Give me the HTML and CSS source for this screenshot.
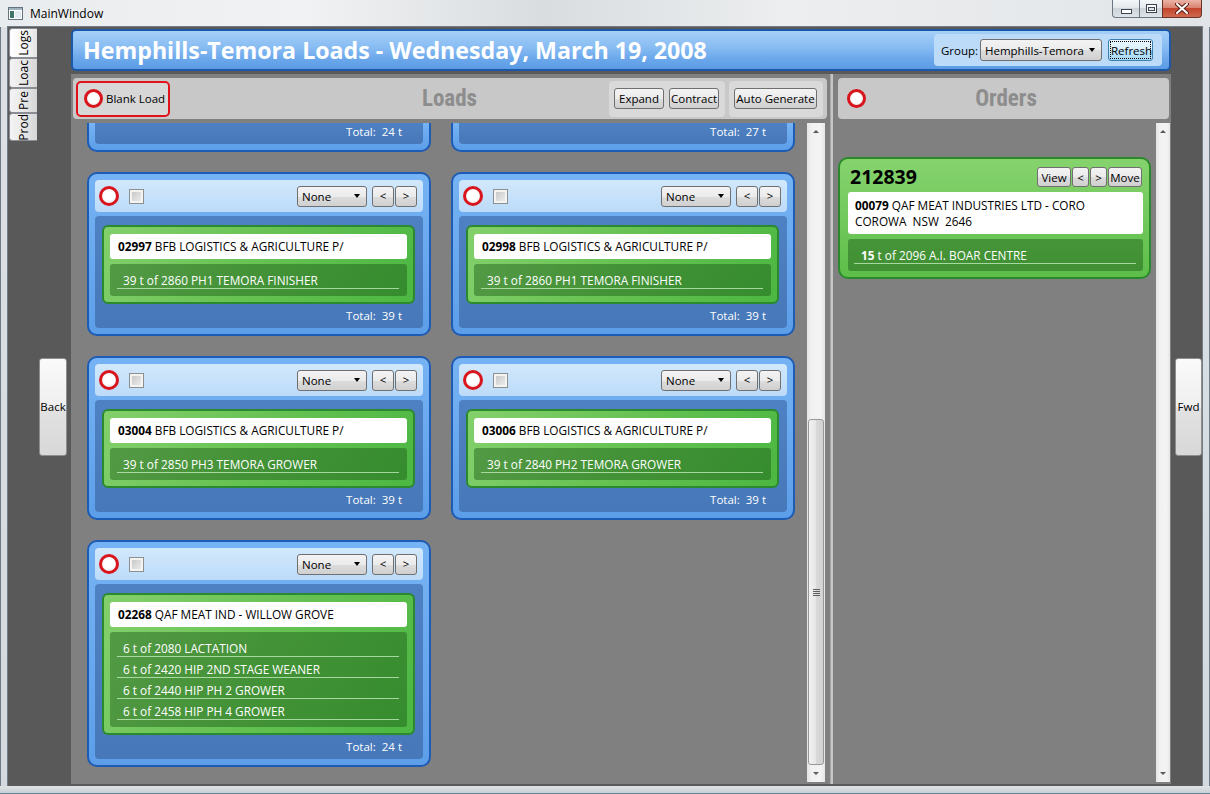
FILE: index.html
```html
<!DOCTYPE html>
<html lang="en">
<head>
<meta charset="utf-8">
<title>MainWindow</title>
<link rel="stylesheet" href="styles.css">
</head>
<body>
<div class="window">
  <div class="titlebar">
    <svg class="app-icon" width="15" height="13" viewBox="0 0 15 13">
      <rect x="0.5" y="0.5" width="14" height="12" fill="#ffffff" stroke="#66737f"/>
      <rect x="1" y="1" width="13" height="2" fill="#9fb2c2"/>
      <rect x="2" y="4" width="4" height="7" fill="#3f7667"/>
      <rect x="7" y="4" width="6" height="7" fill="#e3ebf0"/>
    </svg>
    <div class="win-title">MainWindow</div>
    <div class="controls">
      <div class="ctl ctl-min">
        <svg width="11" height="5" viewBox="0 0 11 5"><rect x="0.5" y="0.5" width="10" height="4" fill="#fff" stroke="#3d4650"/></svg>
      </div>
      <div class="ctl ctl-max">
        <svg width="11" height="9" viewBox="0 0 11 9"><rect x="0.5" y="0.5" width="10" height="8" fill="#fff" stroke="#3d4650"/><rect x="2.5" y="3.5" width="6" height="3" fill="#dfe5ea" stroke="#3d4650"/></svg>
      </div>
      <div class="ctl ctl-close">
        <svg width="14" height="11" viewBox="0 0 14 11"><path d="M2 1 L12 10 M12 1 L2 10" stroke="#5a1e16" stroke-width="4" stroke-linecap="round"/><path d="M2 1 L12 10 M12 1 L2 10" stroke="#ffffff" stroke-width="2" stroke-linecap="round"/></svg>
      </div>
    </div>
  </div>

  <div class="frame-mid">
    <div class="frame-side"></div>
    <div class="client">
      <nav class="tabstrip">
        <div class="vtab vtab-sel h30"><span>Logs</span></div>
        <div class="vtab h30"><span>Loac</span></div>
        <div class="vtab h25"><span>Pre</span></div>
        <div class="vtab h28"><span>Prod</span></div>
      </nav>

      <div class="nav-col nav-left"><button class="nav-btn">Back</button></div>

      <div class="main">
        <header class="banner">
          <h1>Hemphills-Temora Loads - Wednesday, March 19, 2008</h1>
          <div class="group-panel">
            <span class="group-label">Group:</span>
            <div class="combo combo-wide"><span>Hemphills-Temora</span><span class="dd-arrow"></span></div>
            <button class="btn btn-refresh"><span class="focus-rect">Refresh</span></button>
          </div>
        </header>

        <div class="panels">
          <section class="panel panel-loads">
            <div class="toolbar">
              <div class="tb-left">
                <button class="blank-load"><span class="ring ring-sm"></span>Blank Load</button>
              </div>
              <div class="tb-title">Loads</div>
              <div class="tb-right">
                <div class="btn-group">
                  <button class="btn btn-expand">Expand</button>
                  <button class="btn btn-expand">Contract</button>
                </div>
                <div class="btn-group">
                  <button class="btn btn-auto">Auto Generate</button>
                </div>
              </div>
            </div>

            <div class="scroller">
              <div class="viewport">
                <div class="card-grid">
                  <div class="load-card cut">
                    <div class="lc-body">
                      <div class="total">Total:&nbsp; 24 t</div>
                    </div>
                  </div>
                  <div class="load-card cut">
                    <div class="lc-body">
                      <div class="total">Total:&nbsp; 27 t</div>
                    </div>
                  </div>

                  <div class="load-card">
                    <div class="lc-head">
                      <span class="ring"></span><span class="check"></span>
                      <div class="combo combo-small"><span>None</span><span class="dd-arrow"></span></div>
                      <div class="pager"><button class="btn btn-pg">&lt;</button><button class="btn btn-pg">&gt;</button></div>
                    </div>
                    <div class="lc-body">
                      <div class="order-box">
                        <div class="cust"><b>02997</b> BFB LOGISTICS &amp; AGRICULTURE P/</div>
                        <ul class="items"><li>39 t of 2860 PH1 TEMORA FINISHER</li></ul>
                      </div>
                      <div class="total">Total:&nbsp; 39 t</div>
                    </div>
                  </div>

                  <div class="load-card">
                    <div class="lc-head">
                      <span class="ring"></span><span class="check"></span>
                      <div class="combo combo-small"><span>None</span><span class="dd-arrow"></span></div>
                      <div class="pager"><button class="btn btn-pg">&lt;</button><button class="btn btn-pg">&gt;</button></div>
                    </div>
                    <div class="lc-body">
                      <div class="order-box">
                        <div class="cust"><b>02998</b> BFB LOGISTICS &amp; AGRICULTURE P/</div>
                        <ul class="items"><li>39 t of 2860 PH1 TEMORA FINISHER</li></ul>
                      </div>
                      <div class="total">Total:&nbsp; 39 t</div>
                    </div>
                  </div>

                  <div class="load-card">
                    <div class="lc-head">
                      <span class="ring"></span><span class="check"></span>
                      <div class="combo combo-small"><span>None</span><span class="dd-arrow"></span></div>
                      <div class="pager"><button class="btn btn-pg">&lt;</button><button class="btn btn-pg">&gt;</button></div>
                    </div>
                    <div class="lc-body">
                      <div class="order-box">
                        <div class="cust"><b>03004</b> BFB LOGISTICS &amp; AGRICULTURE P/</div>
                        <ul class="items"><li>39 t of 2850 PH3 TEMORA GROWER</li></ul>
                      </div>
                      <div class="total">Total:&nbsp; 39 t</div>
                    </div>
                  </div>

                  <div class="load-card">
                    <div class="lc-head">
                      <span class="ring"></span><span class="check"></span>
                      <div class="combo combo-small"><span>None</span><span class="dd-arrow"></span></div>
                      <div class="pager"><button class="btn btn-pg">&lt;</button><button class="btn btn-pg">&gt;</button></div>
                    </div>
                    <div class="lc-body">
                      <div class="order-box">
                        <div class="cust"><b>03006</b> BFB LOGISTICS &amp; AGRICULTURE P/</div>
                        <ul class="items"><li>39 t of 2840 PH2 TEMORA GROWER</li></ul>
                      </div>
                      <div class="total">Total:&nbsp; 39 t</div>
                    </div>
                  </div>

                  <div class="load-card">
                    <div class="lc-head">
                      <span class="ring"></span><span class="check"></span>
                      <div class="combo combo-small"><span>None</span><span class="dd-arrow"></span></div>
                      <div class="pager"><button class="btn btn-pg">&lt;</button><button class="btn btn-pg">&gt;</button></div>
                    </div>
                    <div class="lc-body">
                      <div class="order-box">
                        <div class="cust"><b>02268</b> QAF MEAT IND - WILLOW GROVE</div>
                        <ul class="items">
                          <li>6 t of 2080 LACTATION</li>
                          <li>6 t of 2420 HIP 2ND STAGE WEANER</li>
                          <li>6 t of 2440 HIP PH 2 GROWER</li>
                          <li>6 t of 2458 HIP PH 4 GROWER</li>
                        </ul>
                      </div>
                      <div class="total">Total:&nbsp; 24 t</div>
                    </div>
                  </div>
                </div>
              </div>
              <div class="vscroll vscroll-loads">
                <div class="sb-arrow"><span class="tri-up"></span></div>
                <div class="sb-space"></div>
                <div class="sb-thumb">
                  <svg width="7" height="7" viewBox="0 0 7 7"><path d="M0 0.5H7M0 2.5H7M0 4.5H7M0 6.5H7" stroke="#5f5f5f" stroke-width="1"/></svg>
                </div>
                <div class="sb-arrow"><span class="tri-down"></span></div>
              </div>
            </div>
          </section>

          <div class="splitter"></div>

          <section class="panel panel-orders">
            <div class="toolbar toolbar-orders">
              <div class="tb-left"><span class="ring ring-sm"></span></div>
              <div class="tb-title">Orders</div>
              <div class="tb-right"></div>
            </div>
            <div class="scroller">
              <div class="viewport viewport-orders">
                <div class="order-card">
                  <div class="oc-head">
                    <span class="oc-num">212839</span>
                    <div class="oc-btns">
                      <button class="btn btn-wide">View</button>
                      <button class="btn btn-narrow">&lt;</button>
                      <button class="btn btn-narrow">&gt;</button>
                      <button class="btn btn-wide">Move</button>
                    </div>
                  </div>
                  <div class="cust addr"><b>00079</b> QAF MEAT INDUSTRIES LTD - CORO<br>COROWA&nbsp; NSW&nbsp; 2646</div>
                  <ul class="items items-order"><li><b>15</b> t of 2096 A.I. BOAR CENTRE</li></ul>
                </div>
              </div>
              <div class="vscroll vscroll-orders">
                <div class="sb-arrow"><span class="tri-up"></span></div>
                <div class="sb-space"></div>
                <div class="sb-arrow"><span class="tri-down"></span></div>
              </div>
            </div>
          </section>
        </div>
      </div>

      <div class="nav-col nav-right"><button class="nav-btn">Fwd</button></div>
    </div>
    <div class="frame-side"></div>
  </div>
  <div class="frame-bottom"></div>
</div>
</body>
</html>
```

FILE: styles.css
```css
* { box-sizing: border-box; }
html, body { margin: 0; padding: 0; }
body {
  width: 1210px;
  height: 794px;
  overflow: hidden;
  font-family: "Segoe UI", "Open Sans", "Noto Sans", sans-serif;
  font-size: 11.5px;
  color: #000;
  background: #d9dee2;
}
button { font-family: inherit; font-size: inherit; color: #000; margin: 0; }
ul { list-style: none; margin: 0; padding: 0; }

.window {
  width: 1210px;
  height: 794px;
  display: flex;
  flex-direction: column;
  background: linear-gradient(180deg, #eef0f2 0px, #dde1e5 27px, #d3d9de 100%);
  box-shadow: inset 0 0 0 1px #6f7a84;
}

/* ---------- title bar ---------- */
.titlebar {
  height: 27px;
  flex: none;
  display: flex;
  align-items: flex-start;
  background: linear-gradient(90deg, #e9ecee 0%, #f1f2f3 25%, #d9dde0 45%, #eceeef 65%, #e2e5e8 100%);
}
.app-icon { margin: 7px 0 0 8px; flex: none; }
.win-title { margin-left: 7px; line-height: 27px; font-size: 12px; }
.controls {
  margin-left: auto;
  margin-right: 8px;
  display: flex;
  height: 18px;
}
.ctl {
  height: 18px;
  display: flex;
  align-items: center;
  justify-content: center;
  border: 1px solid #6c7680;
  border-top: none;
  background: linear-gradient(#f4f6f8 0%, #e3e8ec 45%, #cdd4da 50%, #dde3e8 100%);
}
.ctl-min { width: 27px; border-radius: 0 0 0 4px; border-right: none; padding-top: 5px; }
.ctl-max { width: 23px; border-right: none; }
.ctl-close {
  width: 40px;
  border-radius: 0 0 4px 0;
  border-color: #6e3328;
  background: linear-gradient(#eab3a6 0%, #d98471 45%, #c3452e 50%, #cf6a4f 100%);
}

/* ---------- frame ---------- */
.frame-mid { height: 759px; flex: none; display: flex; }
.frame-side { width: 8px; flex: none; }
.frame-bottom {
  height: 8px;
  flex: none;
  background: linear-gradient(#dfe3e6, #c9d0d5);
  border-bottom: 1px solid #5f8a95;
}

.client {
  width: 1194px;
  flex: none;
  display: flex;
  background: #595959;
  box-shadow: 0 0 0 1px #737d86;
}

/* ---------- left tabs ---------- */
.tabstrip {
  width: 30px;
  flex: none;
  padding: 1px 0 0 1px;
  display: flex;
  flex-direction: column;
}
.vtab {
  width: 28px;
  border: 1px solid #8a8d93;
  border-right: none;
  border-radius: 3px 0 0 3px;
  background: linear-gradient(90deg, #f3f3f3 0%, #e9e9e9 50%, #d6d6d6 100%);
  display: flex;
  align-items: center;
  justify-content: center;
  overflow: hidden;
}
.vtab span {
  writing-mode: vertical-rl;
  transform: rotate(180deg);
  white-space: nowrap;
  font-size: 12px;
  line-height: 14px;
}
.vtab-sel { background: linear-gradient(90deg, #ffffff 0%, #f4f4f4 60%, #e4e4e4 100%); }
.h30 { height: 30px; }
.h25 { height: 25px; }
.h28 { height: 28px; }

/* ---------- back / fwd ---------- */
.nav-col { flex: none; display: flex; align-items: center; }
.nav-left { width: 33px; padding-left: 1px; }
.nav-right { width: 31px; padding-left: 4px; }
.nav-btn {
  width: 28px;
  height: 98px;
  padding: 0;
  border: 1px solid #8e8e8e;
  border-radius: 3px;
  background: linear-gradient(#fafafa 0%, #efefef 50%, #e2e2e2 51%, #d8d8d8 100%);
  font-size: 11.5px;
}
.nav-right .nav-btn { width: 27px; }

/* ---------- main ---------- */
.main {
  width: 1100px;
  flex: none;
  display: flex;
  flex-direction: column;
  padding: 2px 0;
}

.banner {
  height: 42px;
  flex: none;
  margin-bottom: 3px;
  border: 2px solid #1c57a8;
  border-radius: 5px;
  background: linear-gradient(#a5cff8 0%, #86bbf2 45%, #6ea9ec 70%, #5b9be5 100%);
  display: flex;
  align-items: center;
  padding: 0 7px 0 10px;
}
.banner h1 {
  margin: 0;
  font-size: 23.2px;
  font-weight: bold;
  color: #ffffff;
  white-space: nowrap;
  letter-spacing: 0;
}
.group-panel {
  margin-left: auto;
  height: 32px;
  display: flex;
  align-items: center;
  padding: 0 9px 0 7px;
  background: #bbdbf9;
  border-radius: 4px;
}
.group-label { margin-right: 2px; }

.combo {
  display: flex;
  align-items: center;
  justify-content: space-between;
  border: 1px solid #707070;
  border-radius: 3px;
  background: linear-gradient(#f3f3f3 0%, #ebebeb 50%, #dddddd 51%, #d0d0d0 100%);
  padding: 0 6px 0 4px;
}
.combo-wide { width: 122px; height: 22px; }
.combo-small { width: 70px; height: 21px; margin-left: auto; }
.dd-arrow {
  width: 0;
  height: 0;
  border-left: 3.5px solid transparent;
  border-right: 3.5px solid transparent;
  border-top: 4px solid #000;
}

.btn {
  height: 21px;
  padding: 0;
  border: 1px solid #707070;
  border-radius: 3px;
  background: linear-gradient(#f3f3f3 0%, #ebebeb 50%, #dddddd 51%, #cfcfcf 100%);
  line-height: 18px;
  text-align: center;
}
.btn-refresh {
  width: 45px;
  height: 22px;
  margin-left: 6px;
  border-color: #3c7fb1;
  background: linear-gradient(#eaf6fd 0%, #d9f0fc 50%, #bee6fd 51%, #a7d9f5 100%);
  padding: 1px;
}
.focus-rect {
  display: block;
  height: 100%;
  border: 1px dotted #000;
  line-height: 17px;
}

/* ---------- panels ---------- */
.panels { flex: 1; display: flex; min-height: 0; }
.panel { background: #808080; display: flex; flex-direction: column; min-height: 0; }
.panel-loads { width: 759px; padding: 4px 3px 2px 2px; }
.splitter { width: 3px; flex: none; background: #c6c6c6; border-left: 1px solid #a9a9a9; }
.panel-orders { width: 338px; padding: 4px 1px 2px 5px; }

.toolbar {
  height: 41px;
  flex: none;
  background: #c8c8c8;
  border-radius: 4px;
  display: grid;
  grid-template-columns: 1fr auto 1fr;
  align-items: center;
  padding: 0 4px 0 3px;
}
.toolbar-orders { margin-right: 1px; padding-left: 9px; }
.tb-left { justify-self: start; display: flex; align-items: center; }
.tb-right { justify-self: end; display: flex; gap: 4px; }
.tb-title {
  font-family: "Liberation Sans Narrow", "Roboto Condensed", "DejaVu Sans Condensed", sans-serif;
  font-stretch: condensed;
  font-weight: bold;
  font-size: 23px;
  color: #8d8d8d;
  line-height: 30px;
}

.blank-load {
  width: 94px;
  height: 36px;
  display: flex;
  align-items: center;
  gap: 3px;
  padding: 0 0 0 6px;
  border: 2.5px solid #e0131b;
  border-radius: 5px;
  background: #d7d7d7;
  white-space: nowrap;
}

.btn-group {
  height: 36px;
  display: flex;
  align-items: center;
  gap: 5px;
  padding: 0 6px 0 5px;
  background: #d9d9d9;
  border-radius: 4px;
}
.btn-expand { width: 50px; }
.btn-auto { width: 83px; }

.ring {
  width: 20px;
  height: 20px;
  flex: none;
  border-radius: 50%;
  border: 3px solid #d8141c;
  background: radial-gradient(circle at 50% 45%, #ffffff 45%, #e2e2e2 100%);
}
.ring-sm { width: 19px; height: 19px; }

/* ---------- scroll areas ---------- */
.scroller { flex: 1; display: flex; margin-top: 4px; min-height: 0; }
.viewport { flex: 1; overflow: hidden; padding-left: 14px; }
.viewport-orders { padding-left: 0; }

.vscroll {
  flex: none;
  display: flex;
  flex-direction: column;
  background: linear-gradient(90deg, #e4e4e4 0%, #f1f1f1 25%, #f3f3f3 75%, #e6e6e6 100%);
}
.vscroll-loads { width: 18px; margin-right: 2px; }
.vscroll-orders { width: 14px; }
.sb-arrow { height: 17px; flex: none; display: flex; align-items: center; justify-content: center; }
.tri-up { width: 0; height: 0; border-left: 3px solid transparent; border-right: 3px solid transparent; border-bottom: 3px solid #5a5a5a; }
.tri-down { width: 0; height: 0; border-left: 3px solid transparent; border-right: 3px solid transparent; border-top: 3px solid #5a5a5a; }
.sb-space { flex: 1; }
.sb-thumb {
  height: 346px;
  flex: none;
  margin: 0 1px;
  border: 1px solid #979797;
  border-radius: 3px;
  background: linear-gradient(90deg, #f2f2f2 0%, #e6e6e6 50%, #d9d9d9 51%, #d2d2d2 100%);
  display: flex;
  align-items: center;
  justify-content: center;
}

/* ---------- load cards ---------- */
.card-grid {
  display: grid;
  grid-template-columns: 344px 344px;
  column-gap: 20px;
  row-gap: 20px;
  align-items: start;
}
.load-card {
  border: 2px solid #1d5bb4;
  border-radius: 10px;
  background: linear-gradient(#76b3f4, #5c9ee9);
  padding: 6px;
}
.load-card.cut {
  border-top: none;
  border-radius: 0 0 10px 10px;
  padding-top: 0;
}
.load-card.cut .lc-body { margin-top: 0; border-radius: 0 0 4px 4px; padding-top: 0; }
.load-card.cut .total { padding-top: 0; }

.lc-head {
  height: 32px;
  display: flex;
  align-items: center;
  padding: 0 6px 0 4px;
  background: linear-gradient(#d2e8fc, #bcdbf9);
  border-radius: 4px;
}
.check {
  width: 15px;
  height: 15px;
  margin-left: 10px;
  border: 1px solid #8e8f8f;
  background: linear-gradient(135deg, #c2c2c2, #f2f2f2);
  box-shadow: inset 0 0 0 2px #f3f3f3;
}
.pager { display: flex; gap: 1px; margin-left: 5px; }
.btn-pg { width: 22px; }

.lc-body {
  margin-top: 4px;
  background: linear-gradient(#4e81c3, #4778b9);
  border-radius: 4px;
  padding: 9px 8px 0 7px;
}
.order-box {
  border: 2px solid #2b8a2d;
  border-radius: 6px;
  background: linear-gradient(120deg, #84d06c 0%, #66c252 50%, #4cb742 100%);
  padding: 7px 6px 6px 6px;
}
.cust {
  height: 25px;
  line-height: 25px;
  background: #ffffff;
  border-radius: 3px;
  padding-left: 8px;
  white-space: nowrap;
  font-size: 11.8px;
}
.items {
  margin-top: 5px;
  background: rgba(22, 82, 20, 0.42);
  border-radius: 3px;
  padding: 4px 8px 7px 7px;
  font-size: 11.8px;
}
.items li {
  height: 21px;
  line-height: 18px;
  padding-top: 3px;
  padding-left: 6px;
  color: #ffffff;
  border-bottom: 1px solid rgba(200, 240, 195, 0.75);
  white-space: nowrap;
}
.total {
  color: #ffffff;
  text-align: right;
  line-height: 18px;
  padding: 3px 13px 3px 0;
}

/* ---------- order card ---------- */
.order-card {
  width: 313px;
  margin-top: 34px;
  border: 2px solid #2a8a2b;
  border-radius: 10px;
  background: linear-gradient(#86d36e, #5dbe49);
  padding: 8px 6px 6px 8px;
}
.oc-head {
  height: 20px;
  display: flex;
  align-items: center;
  justify-content: space-between;
  padding-left: 2px;
}
.oc-num { font-weight: bold; font-size: 19.5px; line-height: 20px; }
.oc-btns { display: flex; gap: 1px; margin-right: 1px; }
.oc-btns .btn { height: 20px; line-height: 17px; }
.btn-wide { width: 34px; }
.btn-narrow { width: 17px; }
.addr {
  margin-top: 5px;
  height: auto;
  line-height: 16px;
  padding: 5px 7px;
}
.items-order { padding: 4px 7px 7px 6px; }
.items-order li { padding-left: 7px; }
```
